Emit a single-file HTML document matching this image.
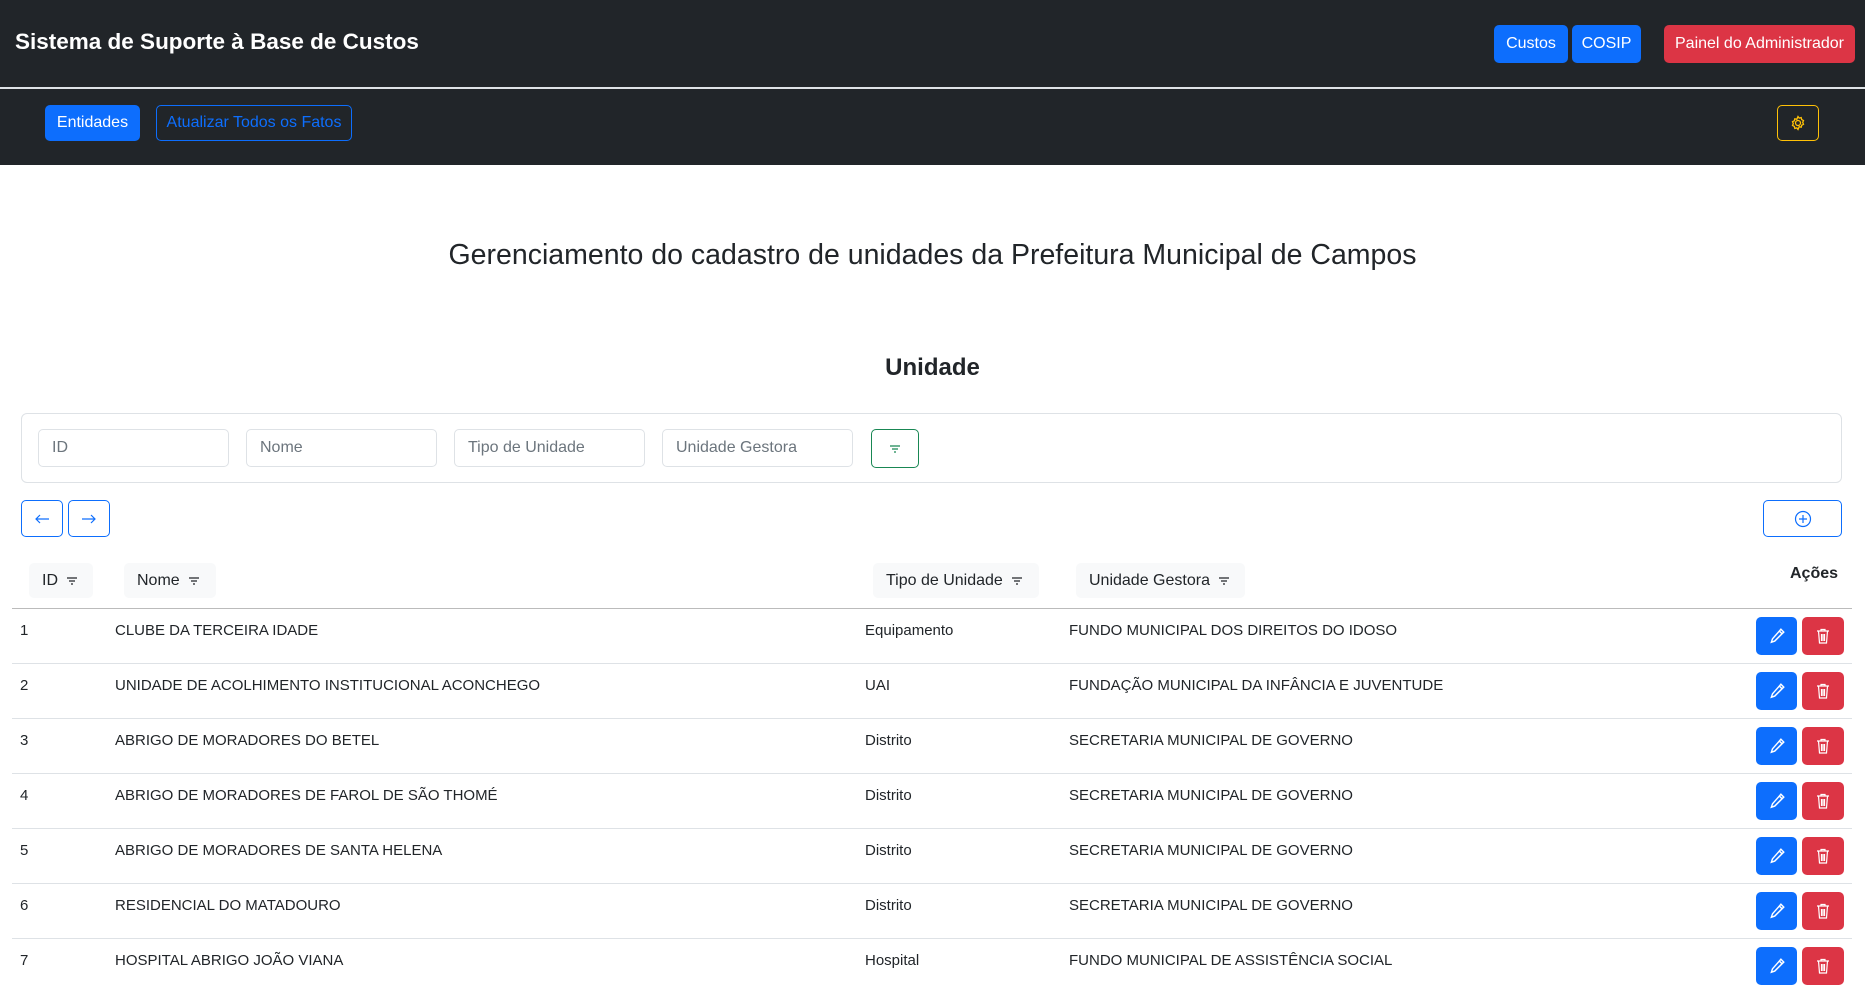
<!DOCTYPE html>
<html><head><meta charset="utf-8"><style>
*{box-sizing:border-box;margin:0;padding:0}
body{width:1865px;height:972px;overflow:hidden;background:#fff;font-family:"Liberation Sans",sans-serif;color:#212529;position:relative}
.a{position:absolute}
.bar1{left:0;top:0;width:1865px;height:87px;background:#212529}
.line{left:0;top:87px;width:1865px;height:2px;background:#dee2e6}
.bar2{left:0;top:89px;width:1865px;height:76px;background:#212529}
.btn{position:absolute;display:flex;align-items:center;justify-content:center;border-radius:5px;font-size:16px}
.pri{background:#0d6efd;color:#fff}
.dan{background:#dc3545;color:#fff}
.obl{border:1px solid #0d6efd;color:#0d6efd}
.inp{position:absolute;top:429px;width:191px;height:38px;border:1px solid #dee2e6;border-radius:5px;font-size:16px;color:#6c757d;padding-left:13px;display:flex;align-items:center}
.th{position:absolute;top:563px;height:35px;background:#f8f9fa;border-radius:5px;font-size:16px;display:flex;align-items:center;padding-left:13px}
.row{position:absolute;left:12px;width:1840px;height:1px;background:#dee2e6}
.c{position:absolute;font-size:15px}
</style></head><body>
<div class="a bar1"></div><div class="a line"></div><div class="a bar2"></div>
<div class="a" style="left:15px;top:29px;color:#fff;font-size:22.5px;font-weight:bold">Sistema de Suporte à Base de Custos</div>
<div class="btn pri" style="left:1494px;top:25px;width:74px;height:38px">Custos</div>
<div class="btn pri" style="left:1572px;top:25px;width:69px;height:38px">COSIP</div>
<div class="btn dan" style="left:1664px;top:25px;width:191px;height:38px">Painel do Administrador</div>
<div class="btn pri" style="left:45px;top:105px;width:95px;height:36px">Entidades</div>
<div class="btn obl" style="left:156px;top:105px;width:196px;height:36px">Atualizar Todos os Fatos</div>
<div class="btn" style="left:1777px;top:105px;width:42px;height:36px;border:1px solid #ffc107"><svg width="16" height="16" viewBox="0 0 16 16" fill="none" stroke="#ffc107" stroke-width="1.3"><circle cx="8" cy="8" r="2.5"/><path d="M8 1.5l1.2 1.6 2-.5.5 2 1.8.9-.8 1.9.8 1.9-1.8.9-.5 2-2-.5L8 14.5l-1.2-1.6-2 .5-.5-2-1.8-.9.8-1.9-.8-1.9 1.8-.9.5-2 2 .5z"/></svg></div>
<div class="a" style="left:0;width:1865px;top:239px;text-align:center;font-size:28.5px">Gerenciamento do cadastro de unidades da Prefeitura Municipal de Campos</div>
<div class="a" style="left:0;width:1865px;top:354px;text-align:center;font-size:24px;font-weight:bold">Unidade</div>
<div class="a" style="left:21px;top:413px;width:1821px;height:70px;border:1px solid #dee2e6;border-radius:6px"></div>
<div class="inp" style="left:38px">ID</div>
<div class="inp" style="left:246px">Nome</div>
<div class="inp" style="left:454px">Tipo de Unidade</div>
<div class="inp" style="left:662px">Unidade Gestora</div>
<div class="btn" style="left:871px;top:429px;width:48px;height:39px;border:1px solid #198754"><svg width="12" height="10"><path d="M1 2h10M3 5h6M5 8h2" stroke="#198754" stroke-width="1.2"/></svg></div>
<div class="btn obl" style="left:21px;top:500px;width:42px;height:37px"><svg width="16" height="12"><path d="M15 6H2M6 2L2 6l4 4" stroke="#0d6efd" stroke-width="1.2" fill="none"/></svg></div>
<div class="btn obl" style="left:68px;top:500px;width:42px;height:37px"><svg width="16" height="12"><path d="M1 6h13M10 2l4 4-4 4" stroke="#0d6efd" stroke-width="1.2" fill="none"/></svg></div>
<div class="btn obl" style="left:1763px;top:500px;width:79px;height:37px"><svg width="18" height="18"><circle cx="9" cy="9" r="7.5" stroke="#0d6efd" stroke-width="1.2" fill="none"/><path d="M9 5v8M5 9h8" stroke="#0d6efd" stroke-width="1.2"/></svg></div>
<div class="th" style="left:29px;width:64px">ID <svg style="margin-left:8px" width="12" height="10"><path d="M1 2h10M3 5h6M5 8h2" stroke="#212529" stroke-width="1.3"/></svg></div>
<div class="th" style="left:124px;width:92px">Nome <svg style="margin-left:8px" width="12" height="10"><path d="M1 2h10M3 5h6M5 8h2" stroke="#212529" stroke-width="1.3"/></svg></div>
<div class="th" style="left:873px;width:166px">Tipo de Unidade <svg style="margin-left:8px" width="12" height="10"><path d="M1 2h10M3 5h6M5 8h2" stroke="#212529" stroke-width="1.3"/></svg></div>
<div class="th" style="left:1076px;width:169px">Unidade Gestora <svg style="margin-left:8px" width="12" height="10"><path d="M1 2h10M3 5h6M5 8h2" stroke="#212529" stroke-width="1.3"/></svg></div>
<div class="c" style="left:1790px;top:565px;font-weight:bold;font-size:16px">Ações</div>
<div class="row" style="top:608px;background:#bbb"></div>
<div id="rows"></div>
<script>
var d=[["1","CLUBE DA TERCEIRA IDADE","Equipamento","FUNDO MUNICIPAL DOS DIREITOS DO IDOSO"],["2","UNIDADE DE ACOLHIMENTO INSTITUCIONAL ACONCHEGO","UAI","FUNDAÇÃO MUNICIPAL DA INFÂNCIA E JUVENTUDE"],["3","ABRIGO DE MORADORES DO BETEL","Distrito","SECRETARIA MUNICIPAL DE GOVERNO"],["4","ABRIGO DE MORADORES DE FAROL DE SÃO THOMÉ","Distrito","SECRETARIA MUNICIPAL DE GOVERNO"],["5","ABRIGO DE MORADORES DE SANTA HELENA","Distrito","SECRETARIA MUNICIPAL DE GOVERNO"],["6","RESIDENCIAL DO MATADOURO","Distrito","SECRETARIA MUNICIPAL DE GOVERNO"],["7","HOSPITAL ABRIGO JOÃO VIANA","Hospital","FUNDO MUNICIPAL DE ASSISTÊNCIA SOCIAL"]];
var h="",pen='<svg width="18" height="18" viewBox="0 0 16 16"><path d="M11.5 2l2.5 2.5-8 8L3 13.5l1-3z M10 3.5l2.5 2.5" stroke="#fff" stroke-width="1.3" fill="none"/></svg>',tr='<svg width="14" height="16" viewBox="0 0 14 16"><path d="M1 3h12M5 3V1.5h4V3M2.5 3l1 12h7l1-12M5.5 6v7M7 6v7M8.5 6v7" stroke="#fff" stroke-width="1.2" fill="none"/></svg>';
for(var i=0;i<7;i++){var t=609+i*55;var y=t+13;
h+='<div class="c" style="left:20px;top:'+y+'px">'+d[i][0]+'</div><div class="c" style="left:115px;top:'+y+'px">'+d[i][1]+'</div><div class="c" style="left:865px;top:'+y+'px">'+d[i][2]+'</div><div class="c" style="left:1069px;top:'+y+'px">'+d[i][3]+'</div>';
h+='<div class="btn pri" style="left:1756px;top:'+(t+8)+'px;width:41px;height:38px">'+pen+'</div><div class="btn dan" style="left:1802px;top:'+(t+8)+'px;width:42px;height:38px">'+tr+'</div>';
if(i<6)h+='<div class="row" style="top:'+(t+54)+'px"></div>';}
document.getElementById("rows").innerHTML=h;
</script>
</body></html>
